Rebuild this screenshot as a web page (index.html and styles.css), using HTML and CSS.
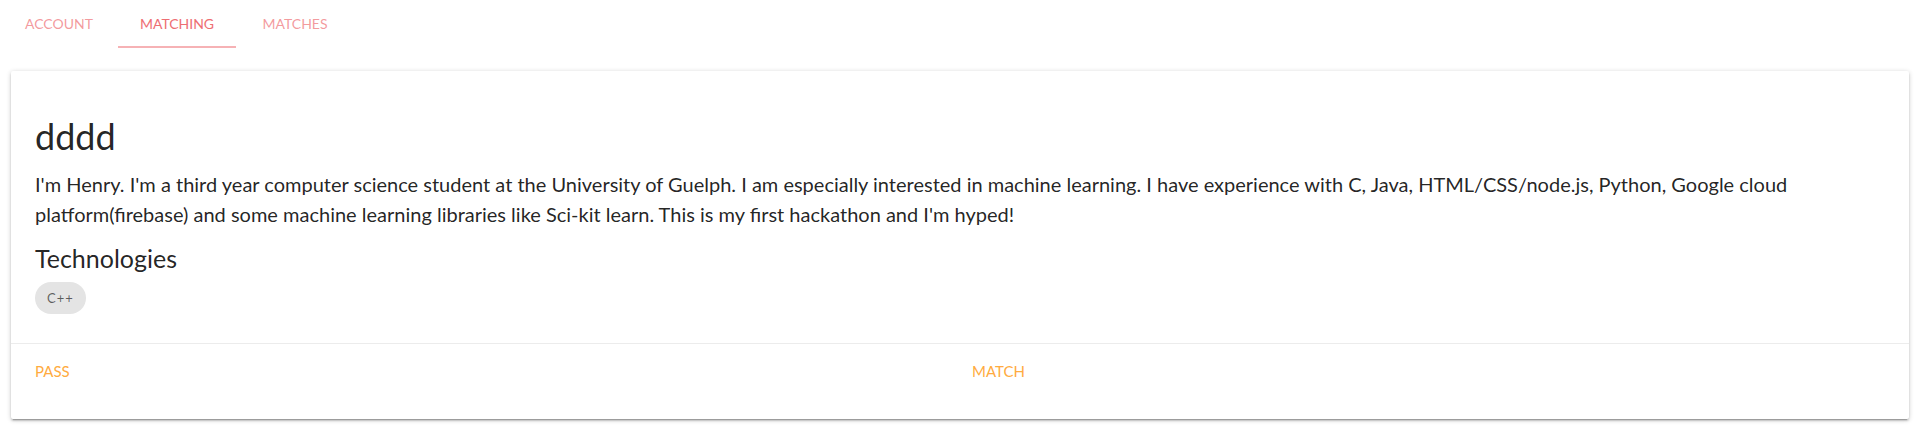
FILE: index.html
```html
<!DOCTYPE html>
<html lang="en">
<head>
<meta charset="utf-8">
<title>Matching</title>
<link rel="stylesheet" href="styles.css">
</head>
<body>
<nav class="tabs">
  <a class="tab" href="#account">Account</a>
  <a class="tab active" href="#matching">Matching</a>
  <a class="tab" href="#matches">Matches</a>
</nav>
<div class="card">
  <div class="card-content">
    <h4 class="title">dddd</h4>
    <p class="bio">I'm Henry. I'm a third year computer science student at the University of Guelph. I am especially interested in machine learning. I have experience with C, Java, HTML/CSS/node.js, Python, Google cloud platform(firebase) and some machine learning libraries like Sci-kit learn. This is my first hackathon and I'm hyped!</p>
    <h5 class="subtitle">Technologies</h5>
    <div class="chips"><span class="chip">C++</span></div>
  </div>
  <div class="card-action">
    <div class="row">
      <div class="col"><a href="#pass">Pass</a></div>
      <div class="col"><a href="#match">Match</a></div>
    </div>
  </div>
</div>
</body>
</html>
```
FILE: styles.css
```css
html { font-size: 15px; }
body {
  margin: 0;
  background: #fff;
  color: rgba(0, 0, 0, 0.87);
  font-family: Lato, "Open Sans", "Noto Sans", sans-serif;
  line-height: 1.5;
}
a { text-decoration: none; }

.tabs {
  display: grid;
  grid-template-columns: repeat(3, 118px);
  height: 48px;
  background: #fff;
}
.tab {
  display: block;
  height: 48px;
  line-height: 48px;
  text-align: center;
  font-size: 14px;
  text-transform: uppercase;
  color: rgba(238, 110, 115, 0.7);
  box-sizing: border-box;
}
.tab.active {
  color: #ee6e73;
  box-shadow: inset 0 -2px 0 #f6b2b5;
}

.card {
  margin: 23px 11px 12px;
  background: #fff;
  border-radius: 2px;
  box-shadow: 0 2px 2px 0 rgba(0,0,0,.14), 0 3px 1px -2px rgba(0,0,0,.2), 0 1px 5px 0 rgba(0,0,0,.2);
}
.card-content {
  padding: 24px;
}
.title {
  margin: 22.8px 0 13.7px;
  font-size: 36px;
  line-height: 37.6px;
  font-weight: 400;
}
.bio {
  margin: 0;
  font-size: 20px;
  line-height: 30px;
}
.subtitle {
  margin: 16.4px 0 9.8px;
  font-size: 25px;
  line-height: 27px;
  font-weight: 400;
}
.chips { display: flex; }
.chip {
  display: inline-block;
  height: 32px;
  line-height: 32px;
  padding: 0 12px;
  border-radius: 16px;
  background: #e4e4e4;
  color: rgba(0, 0, 0, 0.6);
  font-size: 13px;
  letter-spacing: 1px;
  margin: 0 5px 5px 0;
}

.card-action {
  border-top: 1px solid rgba(160, 160, 160, 0.2);
  padding: 16px 24px;
}
.row {
  display: grid;
  grid-template-columns: 1fr 1fr;
  margin: 0 -12px 20px;
}
.col {
  padding: 0 12px;
  line-height: 22.5px;
}
.col a {
  color: #ffab40;
  text-transform: uppercase;
  font-size: 15px;
}
```
